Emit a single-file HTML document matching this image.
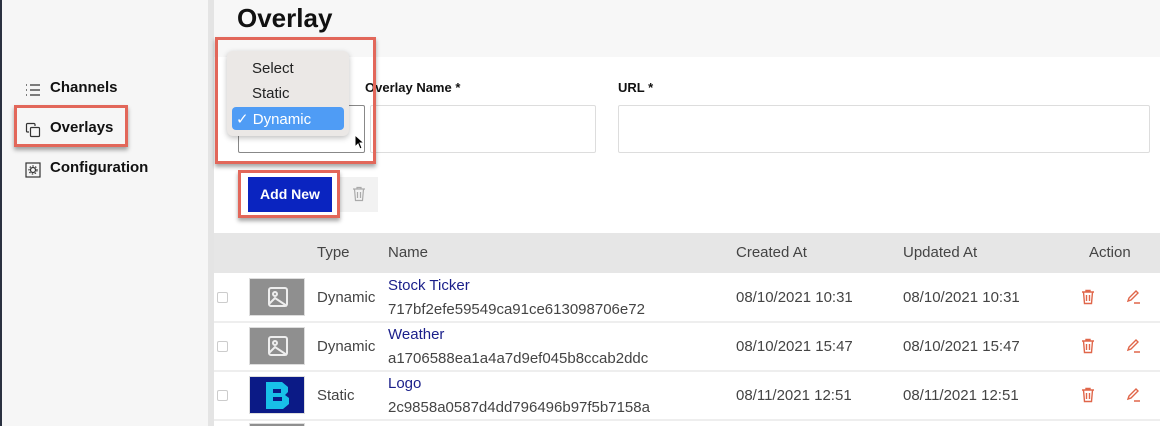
<!DOCTYPE html>
<html style="width:1160px;height:426px;overflow:hidden"><head><style>
*{box-sizing:border-box;margin:0;padding:0}
body{width:1160px;height:426px;overflow:hidden;font-family:"Liberation Sans",sans-serif;background:#fff;position:relative;color:#222}
.side{position:absolute;left:0;top:0;width:208px;height:426px;background:#f6f6f6;border-left:2px solid #2a3140}
.gap{position:absolute;left:208px;top:0;width:6px;height:426px;background:#e4e4e4}
.nav{position:absolute;left:50px;font-weight:bold;font-size:15px;color:#111}
.hdr{position:absolute;left:214px;top:0;width:946px;height:57px;background:#f7f7f7}
h1{position:absolute;left:237px;top:3px;font-size:26px;font-weight:bold;color:#111}
.lbl{position:absolute;font-size:13px;font-weight:bold;color:#111}
.inp{position:absolute;border:1px solid #ddd;border-radius:2px;background:#fff}
.red{position:absolute;border:3px solid #e2675a;box-shadow:0 3px 4px rgba(0,0,0,.35)}
.th{position:absolute;left:214px;top:233px;width:946px;height:40px;background:#e6e6e6}
.t{position:absolute;font-size:15px;color:#444;white-space:nowrap}
.row{position:absolute;left:214px;width:946px;height:2px;background:#eee}
.nm{color:#1a1f8a}
.thumb{position:absolute;left:249px;width:56px;height:38px;background:#8f8f8f;border:1px solid #ddd}
.cb{position:absolute;left:217px;width:11px;height:11px;border:1px solid #ccc;border-radius:2px;background:#fff}
</style></head><body>
<div class="side"></div><div class="gap"></div>
<svg style="position:absolute;left:25px;top:83px" width="16" height="14" viewBox="0 0 16 14"><g stroke="#333" stroke-width="1.2"><path d="M1 2h1M5 2h10M1 7h1M5 7h10M1 12h1M5 12h10"/></g></svg>
<div class="nav" style="top:79px">Channels</div>
<svg style="position:absolute;left:25px;top:122px" width="16" height="16" viewBox="0 0 16 16" fill="none" stroke="#333" stroke-width="1.2"><path d="M10 4V2.5a1 1 0 0 0-1-1H2.5a1 1 0 0 0-1 1V9a1 1 0 0 0 1 1H4"/><rect x="5.5" y="5.5" width="9" height="9" rx="1"/></svg>
<div class="nav" style="top:119px">Overlays</div>
<div class="red" style="left:14px;top:105px;width:114px;height:42px"></div>
<svg style="position:absolute;left:25px;top:162px" width="16" height="16" viewBox="0 0 16 16" fill="none" stroke="#333" stroke-width="1.2"><rect x="1" y="1" width="14" height="14"/><circle cx="8" cy="8" r="2.5"/><circle cx="8" cy="8" r="4" stroke-dasharray="1.5 1.5"/></svg>
<div class="nav" style="top:159px">Configuration</div>

<div class="hdr"></div>
<h1>Overlay</h1>
<div class="lbl" style="left:365px;top:80px">Overlay Name *</div>
<div class="lbl" style="left:618px;top:80px">URL *</div>
<div class="inp" style="left:238px;top:105px;width:127px;height:48px;border-color:#888"></div>
<div class="inp" style="left:370px;top:105px;width:226px;height:48px"></div>
<div class="inp" style="left:618px;top:105px;width:532px;height:48px"></div>
<div style="position:absolute;left:227px;top:51px;width:122px;height:85px;background:#ebe8e6;border-radius:6px;box-shadow:0 2px 6px rgba(0,0,0,.25)"></div>
<div class="t" style="left:252px;top:60px;color:#222">Select</div>
<div class="t" style="left:252px;top:85px;color:#222">Static</div>
<div style="position:absolute;left:232px;top:107px;width:112px;height:23px;background:#4f9cf5;border-radius:4px"></div>
<div class="t" style="left:236px;top:110px;color:#fff">✓ Dynamic</div>
<svg style="position:absolute;left:354px;top:134px" width="10" height="16" viewBox="0 0 10 16"><path d="M1 1v12l3-3 2 5 2-1-2-5h4z" fill="#000" stroke="#fff" stroke-width="1"/></svg>
<div class="red" style="left:215px;top:37px;width:161px;height:127px"></div>
<div style="position:absolute;left:340px;top:177px;width:38px;height:35px;background:#f2f2f2"></div>
<svg style="position:absolute;left:352px;top:186px" width="14" height="16" viewBox="0 0 14 16" fill="none" stroke="#aaa" stroke-width="1.2"><path d="M1 3h12M5 3V1.5h4V3M2.5 3l1 11.5h7l1-11.5M5.5 6v6M8.5 6v6"/></svg>
<div style="position:absolute;left:248px;top:177px;width:84px;height:35px;background:#0a24c0;color:#fff;font-weight:bold;font-size:14px;text-align:center;line-height:35px">Add New</div>
<div class="red" style="left:238px;top:170px;width:102px;height:48px"></div>

<div class="th"></div>
<div class="t" style="left:317px;top:244px">Type</div>
<div class="t" style="left:388px;top:244px">Name</div>
<div class="t" style="left:736px;top:244px">Created At</div>
<div class="t" style="left:903px;top:244px">Updated At</div>
<div class="t" style="left:1089px;top:244px">Action</div>

<div class="row" style="top:321px"></div><div class="row" style="top:370px"></div><div class="row" style="top:419px"></div>

<div class="cb" style="top:292px"></div><div class="cb" style="top:341px"></div><div class="cb" style="top:390px"></div>
<div class="thumb" style="top:278px"></div><div class="thumb" style="top:327px"></div>
<div class="thumb" style="top:376px;background:#0b1a86"></div>
<svg style="position:absolute;left:268px;top:287px" width="20" height="20" viewBox="0 0 20 20" fill="none" stroke="#eee" stroke-width="2"><rect x="1" y="1" width="18" height="18" rx="2"/><circle cx="7" cy="7" r="2"/><path d="M1 17l6-6 12 8"/></svg>
<svg style="position:absolute;left:268px;top:336px" width="20" height="20" viewBox="0 0 20 20" fill="none" stroke="#eee" stroke-width="2"><rect x="1" y="1" width="18" height="18" rx="2"/><circle cx="7" cy="7" r="2"/><path d="M1 17l6-6 12 8"/></svg>
<svg style="position:absolute;left:263px;top:380px" width="30" height="30" viewBox="0 0 30 30"><path d="M3 2h16l6 5v5l-3 3 4 3v6l-6 5H3z" fill="#18c0e8"/><rect x="10" y="9" width="8" height="4" fill="#0b1a86"/><rect x="10" y="17" width="9" height="4" fill="#0b1a86"/></svg>

<div class="t" style="left:317px;top:289px">Dynamic</div>
<div class="t nm" style="left:388px;top:277px">Stock Ticker</div>
<div class="t" style="left:388px;top:301px">717bf2efe59549ca91ce613098706e72</div>
<div class="t" style="left:736px;top:289px">08/10/2021 10:31</div>
<div class="t" style="left:903px;top:289px">08/10/2021 10:31</div>

<div class="t" style="left:317px;top:338px">Dynamic</div>
<div class="t nm" style="left:388px;top:326px">Weather</div>
<div class="t" style="left:388px;top:350px">a1706588ea1a4a7d9ef045b8ccab2ddc</div>
<div class="t" style="left:736px;top:338px">08/10/2021 15:47</div>
<div class="t" style="left:903px;top:338px">08/10/2021 15:47</div>

<div class="t" style="left:317px;top:387px">Static</div>
<div class="t nm" style="left:388px;top:375px">Logo</div>
<div class="t" style="left:388px;top:399px">2c9858a0587d4dd796496b97f5b7158a</div>
<div class="t" style="left:736px;top:387px">08/11/2021 12:51</div>
<div class="t" style="left:903px;top:387px">08/11/2021 12:51</div>

<svg style="position:absolute;left:1081px;top:289px" width="14" height="16" viewBox="0 0 14 16" fill="none" stroke="#e0664a" stroke-width="1.4"><path d="M1 3h12M5 3V1.5h4V3M2.5 3l1 11.5h7l1-11.5M5.5 6v6M8.5 6v6"/></svg>
<svg style="position:absolute;left:1081px;top:338px" width="14" height="16" viewBox="0 0 14 16" fill="none" stroke="#e0664a" stroke-width="1.4"><path d="M1 3h12M5 3V1.5h4V3M2.5 3l1 11.5h7l1-11.5M5.5 6v6M8.5 6v6"/></svg>
<svg style="position:absolute;left:1081px;top:387px" width="14" height="16" viewBox="0 0 14 16" fill="none" stroke="#e0664a" stroke-width="1.4"><path d="M1 3h12M5 3V1.5h4V3M2.5 3l1 11.5h7l1-11.5M5.5 6v6M8.5 6v6"/></svg>
<svg style="position:absolute;left:1127px;top:289px" width="14" height="15" viewBox="0 0 14 15" fill="none" stroke="#e0664a" stroke-width="1.4"><path d="M1 12l1-3 7-7 2 2-7 7zM7 14h6"/></svg>
<svg style="position:absolute;left:1127px;top:338px" width="14" height="15" viewBox="0 0 14 15" fill="none" stroke="#e0664a" stroke-width="1.4"><path d="M1 12l1-3 7-7 2 2-7 7zM7 14h6"/></svg>
<svg style="position:absolute;left:1127px;top:387px" width="14" height="15" viewBox="0 0 14 15" fill="none" stroke="#e0664a" stroke-width="1.4"><path d="M1 12l1-3 7-7 2 2-7 7zM7 14h6"/></svg>
<div class="thumb" style="top:423px;height:3px;border-bottom:none"></div>
</body></html>
